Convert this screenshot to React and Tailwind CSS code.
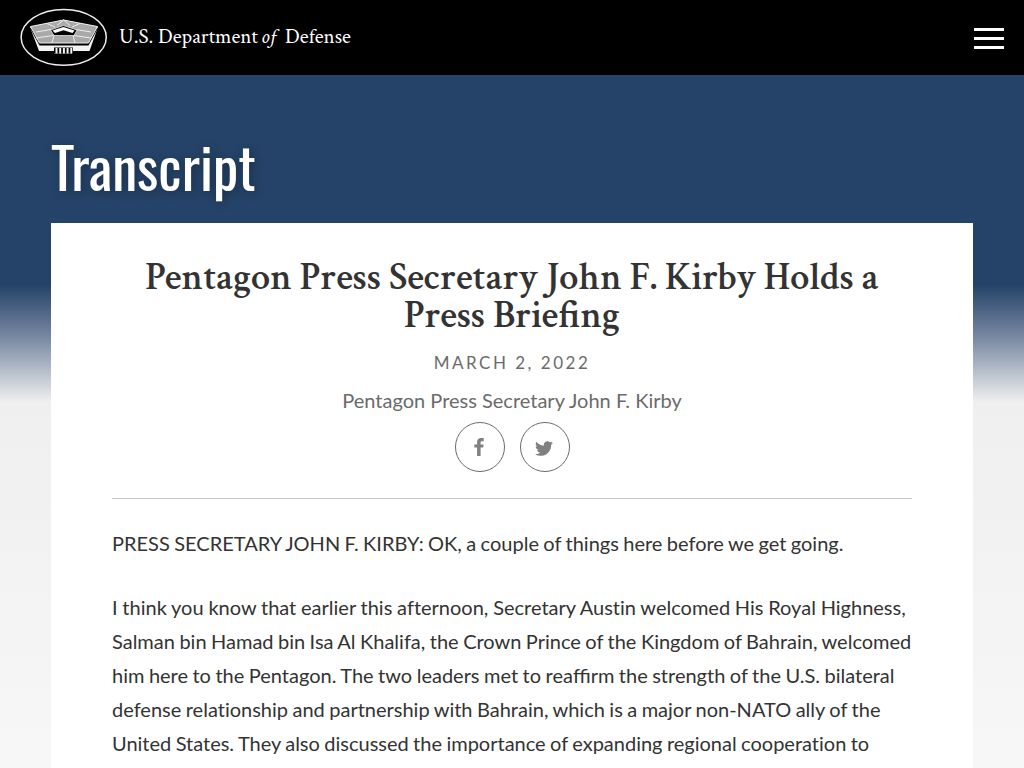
import React from "react";

function Seal() {
  return (
    <svg viewBox="0 0 88 60" className="h-[60px] w-[88px] shrink-0" aria-label="Pentagon seal">
      <ellipse cx="43.7" cy="29.3" rx="42.6" ry="27.9" fill="#000" stroke="#eee" strokeWidth="1.5" />
      <path d="M10 19 43.5 12 78 19 69.500 43H52V45.500H34V43H19Z" fill="#f4f4f4" />
      <path d="M10 20 43.5 12 78 20 68.500 37.500H19.500Z" fill="#000" />
      <path d="M10.500 18.500 43.5 12 77.500 18.500 68.500 35H19.500Z" fill="#a9a9a9" stroke="#eee" strokeWidth="1" />
      <path d="M27 15.500 35 19M60 15.500 52 19M43.5 12 37 17.500M43.5 12 50 17.500M16 24 31 21.500M71 24 56 21.500M16 30 33 27.500M71 30 54 27.500M34 27 32 35M53 27 55 35" stroke="#ededed" strokeWidth="1" />
      <path d="M30.500 22 43.5 17.500 57 22 54 27.500H34Z" fill="#000" stroke="#e4e4e4" strokeWidth=".8" />
      <path d="M32.500 22.500 43.5 19 54.500 22.500 52.500 25 43.5 22.200 35 25Z" fill="#fff" />
      <path d="M34 39.500H53V45.500H34Z" fill="#000" />
      <path d="M36.500 40V45.500M40.200 40V45.500M43.900 40V45.500M47.600 40V45.500M51.300 40V45.500" stroke="#f4f4f4" strokeWidth="2" />
    </svg>
  );
}

function ShareButton({ label, children }) {
  return (
    <button aria-label={label} className="flex size-[50px] items-center justify-center rounded-full border border-[#6b6b6b] text-[#808080]">
      {children}
    </button>
  );
}

export default function App() {
  return (
    <div className="flex h-screen flex-col overflow-hidden bg-[linear-gradient(180deg,#254368_0px,#254368_285px,#7485a0_335px,#efefef_402px,#f7f7f7_768px)] font-['Lato',sans-serif]">
      <header className="flex h-[75px] shrink-0 items-center justify-between bg-black px-5">
        <div className="flex items-center gap-[11px]">
          <Seal />
          <div className="-mt-[2px] flex text-[21px] leading-7 text-white font-['Crimson_Text','Liberation_Serif',serif]">
            <span className="w-[142px] whitespace-nowrap">U.S. Department</span>
            <span className="w-[24px] italic">of</span>
            <span>Defense</span>
          </div>
        </div>
        <button aria-label="Menu" className="mt-[2px] flex w-[30px] flex-col gap-[6px]">
          <span className="h-[3px] bg-white" />
          <span className="h-[3px] bg-white" />
          <span className="h-[3px] bg-white" />
        </button>
      </header>

      <main className="flex flex-1 flex-col px-[51px]">
        <div className="h-[148px] shrink-0 pt-12">
          <h1 className="w-max text-[56.8px] leading-[84px] text-white [text-shadow:2px_2px_10px_rgba(0,0,0,0.3)] font-['Oswald','Roboto',sans-serif]">
            Transcript
          </h1>
        </div>
        <article className="flex flex-1 flex-col bg-white px-[61px] pt-9">
          <h2 className="text-center text-[38.4px] leading-[38px] font-semibold text-[#333] font-['Crimson_Text','Liberation_Serif',serif]">
            Pentagon Press Secretary John F. Kirby Holds a Press Briefing
          </h2>
          <p className="mt-[16px] text-center text-[17px] leading-6 tracking-[2.5px] text-[#6b6b6b]">MARCH 2, 2022</p>
          <p className="mt-[11px] text-center text-[20px] leading-[28px] text-[#6b6b6b] [font-variant-ligatures:none]">Pentagon Press Secretary John F. Kirby</p>
          <div className="mt-[8px] flex justify-center gap-[15px]">
            <ShareButton label="Facebook">
              <svg viewBox="0 0 10 18" className="-ml-px h-[18px] w-[10px]" fill="currentColor">
                <path d="M9.700.2V3.200H8C6.800 3.200 6.600 3.800 6.600 4.600v1.800h3l-.4 3.100H6.600V18H3.100V9.500H.3V6.400h2.800V4.100C3.100 1.600 4.700.1 7.200.1c1.100 0 2.100 0 2.500.1Z" />
              </svg>
            </ShareButton>
            <ShareButton label="Twitter">
              <svg viewBox="44 64 1576 1280" className="mt-[2px] -ml-px h-[15px] w-[18px]" fill="currentColor">
                <path d="M1620 280q-67 98-162 167 1 14 1 42 0 130-38 259.500T1305.500 997 1121 1207.500t-258 146-323 54.500q-271 0-496-145 35 4 78 4 225 0 401-138-105-2-188-64.500T221 905q33 5 61 5 43 0 85-11-112-23-185.500-111.500T108 582v-4q68 38 146 41-66-44-105-115t-39-154q0-88 44-163 121 149 294.500 238.500T820 525q-8-38-8-74 0-134 94.500-228.500T1135 128q140 0 236 102 109-21 205-78-37 115-142 178 93-10 186-50Z" transform="translate(0 -64)" />
              </svg>
            </ShareButton>
          </div>
          <hr className="mt-[26px] border-0 border-t border-[#c8c8c8]" />
          <div className="mt-[27px] text-[20px] leading-[34px] text-[#333] [font-variant-ligatures:none]">
            <p className="whitespace-nowrap [word-spacing:-0.72px]">PRESS SECRETARY JOHN F. KIRBY: OK, a couple of things here before we get going.</p>
            <p className="mt-[30px] whitespace-nowrap [word-spacing:-0.65px]">
              <span className="[word-spacing:-0.35px]">I think you know that earlier this afternoon, Secretary Austin welcomed His Royal Highness,</span><br />
              Salman bin Hamad bin Isa Al Khalifa, the Crown Prince of the Kingdom of Bahrain, welcomed<br />
              him here to the Pentagon. The two leaders met to rea<span className="[font-variant-ligatures:common-ligatures]">ffi</span>rm the strength of the U.S. bilateral<br />
              defense relationship and partnership with Bahrain, which is a major non-NATO ally of the<br />
              <span className="[word-spacing:-0.72px]">United States. They also discussed the importance of expanding regional cooperation to</span>
            </p>
          </div>
        </article>
      </main>
    </div>
  );
}
